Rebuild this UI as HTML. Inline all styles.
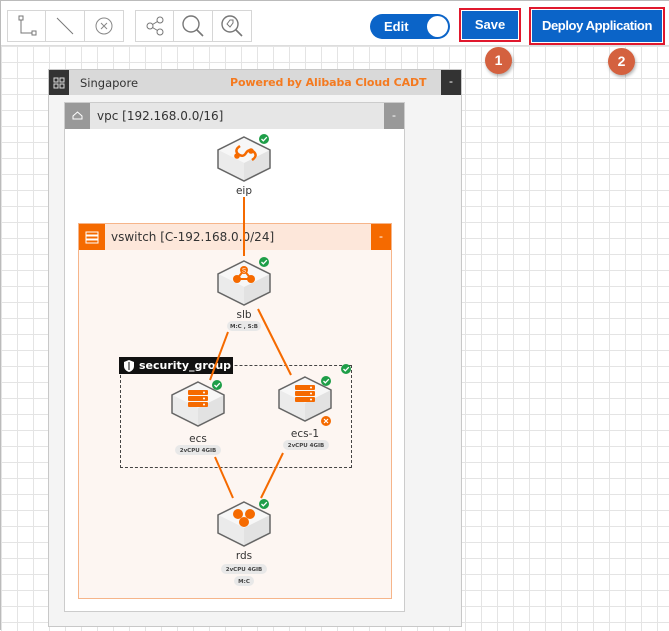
<!DOCTYPE html>
<html><head><meta charset="utf-8"><style>
*{margin:0;padding:0;box-sizing:border-box}
body{width:669px;height:630px;overflow:hidden;font-family:"Liberation Sans",sans-serif;background:#fff;position:relative;border:1px solid #bbb}
.grid{position:absolute;left:0;top:45px;width:669px;height:585px;background-color:#fff;background-image:linear-gradient(#e4e4e4 1px,transparent 1px),linear-gradient(90deg,#e4e4e4 1px,transparent 1px);background-size:16px 16px}
.tb{position:absolute;left:0;top:0;width:669px;height:45px;background:#fff;border-bottom:1px solid #ddd}
.grp{position:absolute;top:9px;height:32px;border:1px solid #d6d6d6;display:flex}
.grp div{width:39px;height:30px;border-right:1px solid #d6d6d6;display:flex;align-items:center;justify-content:center}
.grp div:last-child{border-right:none}
.abs{position:absolute}
.mono{font-family:"DejaVu Sans",sans-serif}
</style></head><body>
<div class="grid"></div>
<div class="tb">
 <div class="grp" style="left:6px;width:117px"><div><svg width="22" height="22"><path d="M5 5v13h12" fill="none" stroke="#777"/><rect x="3" y="1" width="4" height="4" fill="#fff" stroke="#777"/><rect x="16" y="16" width="4" height="4" fill="#fff" stroke="#777"/></svg></div><div><svg width="22" height="22"><path d="M3 3L19 19" stroke="#777"/></svg></div><div><svg width="22" height="22"><circle cx="11" cy="11" r="8" fill="none" stroke="#888"/><path d="M8 8l6 6M14 8l-6 6" stroke="#888"/></svg></div></div>
 <div class="grp" style="left:134px;width:117px"><div><svg width="22" height="22"><circle cx="16" cy="5" r="3" fill="none" stroke="#777"/><circle cx="6" cy="11" r="3" fill="none" stroke="#777"/><circle cx="16" cy="17" r="3" fill="none" stroke="#777"/><path d="M8.5 9.5l5-3M8.5 12.5l5 3" stroke="#777"/></svg></div><div><svg width="24" height="24"><circle cx="10" cy="10" r="8" fill="none" stroke="#777" stroke-width="1.4"/><path d="M16 16l6 6" stroke="#777" stroke-width="1.6"/></svg></div><div><svg width="24" height="24"><circle cx="10" cy="10" r="8" fill="none" stroke="#777" stroke-width="1.4"/><path d="M16 16l6 6" stroke="#777" stroke-width="1.6"/><path d="M7 10l3-4h3v3l-3 4z" fill="none" stroke="#777"/></svg></div></div>
 <div class="abs" style="left:369px;top:13px;width:80px;height:25px;border-radius:13px;background:#0b64c8"><span class="abs" style="left:14px;top:5px;color:#fff;font-weight:bold;font-size:13px">Edit</span><div class="abs" style="right:2px;top:2px;width:21px;height:21px;border-radius:50%;background:#fff"></div></div>
 <div class="abs" style="left:458px;top:7px;width:62px;height:34px;border:2px solid #e0182d;padding:1px"><div style="background:#0b64c8;height:100%;color:#fff;font-weight:bold;font-size:13px;text-align:center;line-height:28px">Save</div></div>
 <div class="abs" style="left:528px;top:6px;width:136px;height:38px;border:2px solid #e0182d;padding:1px"><div style="background:#0b64c8;height:100%;color:#fff;font-size:13px;font-weight:bold;letter-spacing:-0.4px;text-align:center;line-height:32px">Deploy Application</div></div>
</div>
<div class="abs" style="left:484px;top:46px;width:27px;height:27px;border-radius:50%;background:#d4613f;color:#fff;font-weight:bold;font-size:14px;text-align:center;line-height:27px;box-shadow:1px 2px 3px rgba(0,0,0,.3)">1</div>
<div class="abs" style="left:607px;top:47px;width:27px;height:27px;border-radius:50%;background:#d4613f;color:#fff;font-weight:bold;font-size:14px;text-align:center;line-height:27px;box-shadow:1px 2px 3px rgba(0,0,0,.3)">2</div>

<div class="abs" style="left:47px;top:68px;width:414px;height:558px;background:#f4f4f4;border:1px solid #c8c8c8"></div>
<div class="abs" style="left:48px;top:69px;width:412px;height:25px;background:#d9d9d9"></div>
<div class="abs" style="left:48px;top:69px;width:20px;height:25px;background:#333"><svg width="20" height="25"><g fill="none" stroke="#ddd"><rect x="5" y="8" width="4" height="4"/><rect x="11" y="8" width="4" height="4"/><rect x="5" y="14" width="4" height="4"/><rect x="11" y="14" width="4" height="4"/></g></svg></div>
<div class="abs mono" style="left:79px;top:75px;font-size:11.5px;color:#333">Singapore</div>
<div class="abs mono" style="left:229px;top:75px;font-size:11px;color:#f47a20;font-weight:bold;letter-spacing:-0.1px">Powered by Alibaba Cloud CADT</div>
<div class="abs" style="left:440px;top:69px;width:20px;height:25px;background:#333;color:#fff;text-align:center;font-size:12px;line-height:23px">-</div>
<div class="abs" style="left:63px;top:101px;width:341px;height:510px;background:#fff;border:1px solid #ccc"></div>
<div class="abs" style="left:64px;top:102px;width:339px;height:26px;background:#e6e6e6"></div>
<div class="abs" style="left:64px;top:102px;width:25px;height:26px;background:#999"><svg width="25" height="26"><path d="M8 16h9v-3l-4.5-4-4.5 4z" fill="none" stroke="#fff"/></svg></div>
<div class="abs mono" style="left:96px;top:108px;font-size:12px;color:#333">vpc [192.168.0.0/16]</div>
<div class="abs" style="left:383px;top:102px;width:20px;height:26px;background:#999;color:#fff;text-align:center;font-size:12px;line-height:24px">-</div>
<div class="abs" style="left:77px;top:222px;width:314px;height:376px;background:#fdf6f2;border:1px solid #f6b58a"></div>
<div class="abs" style="left:78px;top:223px;width:312px;height:26px;background:#fde7da"></div>
<div class="abs" style="left:78px;top:223px;width:26px;height:26px;background:#f56a00"><svg width="26" height="26"><g fill="none" stroke="#fff"><rect x="7" y="8" width="12" height="3"/><rect x="7" y="12" width="12" height="3"/><rect x="7" y="16" width="12" height="3"/></g></svg></div>
<div class="abs mono" style="left:110px;top:229px;font-size:12px;color:#333">vswitch [C-192.168.0.0/24]</div>
<div class="abs" style="left:370px;top:223px;width:20px;height:26px;background:#f56a00;color:#fff;text-align:center;font-size:12px;line-height:24px">-</div>
<div class="abs" style="left:119px;top:364px;width:232px;height:103px;border:1px dashed #444"></div>
<div class="abs mono" style="left:118px;top:356px;width:114px;height:17px;background:#111;color:#fff;font-size:11px;font-weight:bold;line-height:17px;padding-left:20px">security_group</div>
<svg class="abs" style="left:122px;top:358px" width="12" height="13"><path d="M6 1l5 2v4c0 3-2 5-5 6-3-1-5-3-5-6V3z" fill="#fff"/><path d="M6 3v8" stroke="#111"/></svg>

<svg class="abs" style="left:0;top:0" width="669" height="630">
<defs>
<g id="cube">
<path d="M0-22L26-9V9L0 22L-26 9V-9Z" fill="#e2e2e2"/>
<path d="M0-22L26-9L0 4L-26-9Z" fill="#f7f7f7"/>
<path d="M-26-9L0 4V22L-26 9Z" fill="#ebebeb"/>
<path d="M0-22L26-9V9L0 22L-26 9V-9Z" fill="none" stroke="#666" stroke-width="1.5"/>
</g>
<g id="ok"><circle r="5" fill="#1e9e48"/><path d="M-2.5 0l1.8 1.8L2.8-1.8" fill="none" stroke="#fff" stroke-width="1.3"/></g>
<g id="srv" fill="#f56a00"><rect x="-10" y="-20" width="20" height="5" rx="1"/><rect x="-10" y="-14" width="20" height="5" rx="1"/><rect x="-10" y="-8" width="20" height="5" rx="1"/><g fill="#fff"><circle cx="6" cy="-17.5" r="1"/><circle cx="6" cy="-11.5" r="1"/><circle cx="6" cy="-5.5" r="1"/></g></g>
</defs>
<g stroke="#f56a00" stroke-width="2">
<path d="M243 196V255"/><path d="M227 331L209 379"/><path d="M257 308L290 374"/><path d="M214 456L232 497"/><path d="M282 452L260 497"/>
</g>
<use href="#cube" x="243" y="158"/><use href="#ok" x="263" y="138"/>
<path d="M239 145q-6 4-2 8q5 4 8-1q3-5 8-1q4 4-2 8" fill="none" stroke="#f56a00" stroke-width="2.5"/><circle cx="236" cy="155" r="2.8" fill="#f56a00"/><circle cx="250" cy="150" r="2.8" fill="#f56a00"/>
<use href="#cube" x="243" y="282"/><use href="#ok" x="263" y="261"/>
<g fill="#f56a00"><circle cx="243" cy="269" r="4"/><circle cx="236" cy="278" r="4"/><circle cx="250" cy="278" r="4"/><path d="M243 269L236 278H250Z" fill="none" stroke="#f56a00" stroke-width="2"/></g><text x="243" y="271.5" font-size="6" fill="#fff" text-anchor="middle">S</text>
<use href="#cube" x="197" y="403"/><use href="#ok" x="216" y="384"/><use href="#srv" x="197" y="409"/>
<use href="#cube" x="304" y="398"/><use href="#ok" x="325" y="380"/><use href="#srv" x="304" y="404"/>
<use href="#ok" x="345" y="368"/>
<circle cx="325" cy="420" r="5" fill="#f56a00"/><path d="M323 418l4 4M327 418l-4 4" stroke="#fff" stroke-width="1.2"/>
<use href="#cube" x="243" y="523"/><use href="#ok" x="263" y="503"/>
<g fill="#f56a00"><circle cx="237" cy="513" r="5"/><circle cx="249" cy="513" r="5"/><circle cx="243" cy="521" r="5"/></g>
<g font-family="DejaVu Sans,sans-serif" font-size="10.5" fill="#333" text-anchor="middle">
<text x="243" y="193">eip</text><text x="243" y="317">slb</text><text x="197" y="441">ecs</text><text x="304" y="436">ecs-1</text><text x="243" y="558">rds</text>
</g>
<g fill="#e8e8e8"><rect x="226" y="320" width="34" height="10" rx="5"/><rect x="174" y="444" width="46" height="10" rx="5"/><rect x="282" y="439" width="46" height="10" rx="5"/><rect x="220" y="563" width="46" height="10" rx="5"/><rect x="233" y="575" width="20" height="10" rx="5"/></g>
<g font-family="DejaVu Sans,sans-serif" font-size="5.5" fill="#444" text-anchor="middle" font-weight="bold">
<text x="243" y="327">M:C , S:B</text><text x="197" y="451">2vCPU 4GIB</text><text x="305" y="446">2vCPU 4GIB</text><text x="243" y="570">2vCPU 4GIB</text><text x="243" y="582">M:C</text>
</g>
</svg>
</body></html>
